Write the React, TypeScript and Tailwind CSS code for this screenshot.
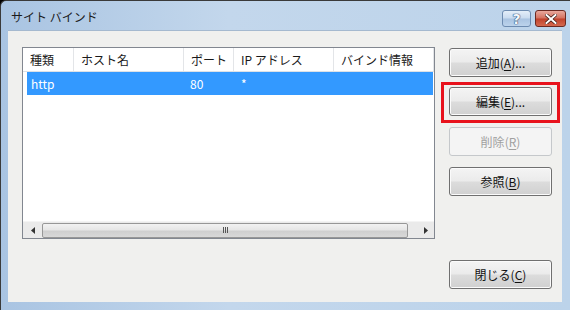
import React from "react";

const font = { fontFamily: '"Noto Sans CJK JP", "Noto Sans", sans-serif' };

function Btn({ label, k, rest, disabled }: { label: string; k: string; rest: string; disabled?: boolean }) {
  return (
    <div
      className={
        "w-[103px] h-[29px] rounded-[3px] border flex items-center justify-center text-[12px] leading-none " +
        (disabled
          ? "border-[#c5c8cb] bg-[#f4f4f4] text-[#a0a0a0]"
          : "border-[#707070] bg-[linear-gradient(#f4f4f4_0%,#ebebeb_48%,#dcdcdc_52%,#d0d0d0_100%)] text-[#111] shadow-[inset_0_0_0_1px_#fbfbfb]")
      }
    >
      <span>
        {label}(<span className="underline underline-offset-2">{k}</span>){rest}
      </span>
    </div>
  );
}

export default function App() {
  const cols = [
    { w: 51, t: "種類" },
    { w: 110, t: "ホスト名" },
    { w: 50, t: "ポート" },
    { w: 100, t: "IP アドレス" },
    { w: 100, t: "バインド情報" },
  ];
  return (
    <div className="w-[570px] h-[310px] bg-black" style={font}>
      <div className="w-[570px] h-[310px] flex flex-col bg-[linear-gradient(90deg,#a9c4e2,#c3d7ec_40%,#bcd3ea)] border-l border-t border-[#3a3a3a] rounded-tl-[6px] overflow-hidden">
        {/* title bar */}
        <div className="h-[29px] flex items-start shrink-0">
          <div className="pl-[10px] pt-[8px] text-[12px] leading-[16px] text-[#1b1b1b]">サイト バインド</div>
          <div className="ml-auto flex gap-[4px] pt-[9px] pr-[4px]">
            <div className="w-[29px] h-[17px] rounded-[3px] border border-[#6d8bb0] bg-[linear-gradient(#e4eef9_0%,#c9dbef_48%,#a9c3e1_52%,#bcd3ec_100%)] flex items-center justify-center">
              <span className="text-[14px] leading-none font-bold text-[#f4f8fc] [text-shadow:0_0_1px_#2c4c78,0_0_1px_#2c4c78,0_0_1px_#2c4c78]" style={{ fontFamily: '"DejaVu Sans", sans-serif' }}>
                ?
              </span>
            </div>
            <div className="w-[31px] h-[17px] rounded-[3px] border border-[#6b2a22] bg-[linear-gradient(#e9a89c_0%,#d4715f_48%,#c0412b_52%,#d4694f_100%)] flex items-center justify-center">
              <svg width="12" height="10" viewBox="0 0 12 10">
                <path d="M1.5 1 L10.5 9 M10.5 1 L1.5 9" stroke="#3a1a14" strokeWidth="3.4" strokeLinecap="square" />
                <path d="M1.5 1 L10.5 9 M10.5 1 L1.5 9" stroke="#fff" strokeWidth="2" strokeLinecap="square" />
              </svg>
            </div>
          </div>
        </div>
        {/* client */}
        <div className="ml-[7px] mr-[8px] mb-[8px] flex-1 bg-[#f0f0ee] border-t border-[#a5b9cf] flex pl-[14px] pr-[8px] pt-[16px] pb-[13px]">
          <div className="w-[413px] h-[192px] border border-[#828790] bg-white flex flex-col text-[12px]">
            {/* header */}
            <div className="h-[24px] flex shrink-0 bg-white border-b border-[#dde1e6]">
              {cols.map((c, i) => (
                <div
                  key={i}
                  className="h-full flex items-center pl-[7px] border-r border-[#e3e5e8] text-[#1a1a1a] whitespace-nowrap overflow-hidden"
                  style={{ width: c.w }}
                >
                  {c.t}
                </div>
              ))}
            </div>
            {/* selected row */}
            <div className="h-[23px] ml-[4px] mr-[1px] bg-[#3399ff] text-white flex items-center">
              <div className="w-[47px] pl-[4px]">http</div>
              <div className="w-[110px]"></div>
              <div className="w-[50px] pl-[6px]">80</div>
              <div className="w-[100px] pl-[7px]">*</div>
            </div>
            <div className="flex-1"></div>
            {/* scrollbar */}
            <div className="h-[17px] bg-[#eaeaea] flex items-center shrink-0 border-t border-[#f4f4f4]">
              <div className="w-[19px] h-full flex items-center justify-center">
                <svg width="4" height="7" viewBox="0 0 4 7">
                  <path d="M4 0 L0 3.5 L4 7 Z" fill="#333" />
                </svg>
              </div>
              <div className="w-[366px] h-[15px] rounded-[2px] border border-[#979797] bg-[linear-gradient(#f2f2f2_0%,#e6e6e6_45%,#cfcfcf_55%,#d8d8d8_100%)] flex items-center justify-center">
                <div className="flex gap-[1px]">
                  <div className="w-[1px] h-[6px] bg-[#555]" />
                  <div className="w-[1px] h-[6px] bg-[#555]" />
                  <div className="w-[1px] h-[6px] bg-[#555]" />
                </div>
              </div>
              <div className="flex-1 h-full flex items-center justify-end pr-[6px]">
                <svg width="4" height="7" viewBox="0 0 4 7">
                  <path d="M0 0 L4 3.5 L0 7 Z" fill="#333" />
                </svg>
              </div>
            </div>
          </div>
          {/* buttons */}
          <div className="ml-[14px] flex flex-col pt-[1px]">
            <Btn label="追加" k="A" rest="..." />
            <div className="mt-[5px] -mx-[8px] px-[5px] pt-[2px] pb-[4px] border-[3px] border-[#e8121c]">
              <Btn label="編集" k="E" rest="..." />
            </div>
            <div className="mt-[4px]">
              <Btn label="削除" k="R" rest="" disabled />
            </div>
            <div className="mt-[11px]">
              <Btn label="参照" k="B" rest="" />
            </div>
            <div className="mt-auto">
              <Btn label="閉じる" k="C" rest="" />
            </div>
          </div>
        </div>
      </div>
    </div>
  );
}
